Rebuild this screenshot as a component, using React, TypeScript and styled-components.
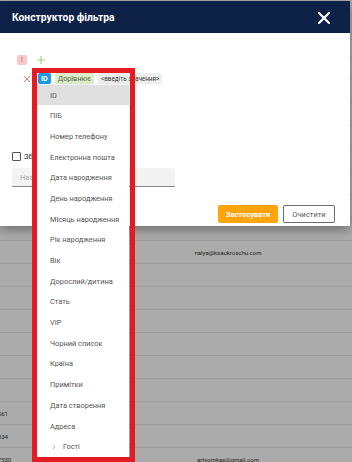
import styled, { createGlobalStyle } from "styled-components";
import { ChevronRight } from "lucide-react";

const GlobalStyle = createGlobalStyle`
  html, body {
    margin: 0;
    padding: 0;
    background: #ababab;
    font-family: Roboto, "Liberation Sans", sans-serif;
    overflow: hidden;
  }
`;

const fields = [
  "ID",
  "ПІБ",
  "Номер телефону",
  "Електронна пошта",
  "Дата народження",
  "День народження",
  "Місяць народження",
  "Рік народження",
  "Вік",
  "Дорослий/дитина",
  "Стать",
  "VIP",
  "Чорний список",
  "Країна",
  "Примітки",
  "Дата створення",
  "Адреса",
];

const rows: { phone: string; email: string }[] = Array.from(
  { length: 20 },
  () => ({ phone: "", email: "" })
);
rows[10] = { phone: "", email: "nalya@ksaukroschu.com" };
rows[17] = { phone: "+380971234561", email: "" };
rows[18] = { phone: "+380661239834", email: "" };
rows[19] = { phone: "+3809312347530", email: "artyomkas@gmail.com" };

function CloseIcon() {
  return (
    <svg width="12" height="12" viewBox="0 0 12 12">
      <path
        d="M1 1 L11 11 M11 1 L1 11"
        stroke="#fff"
        strokeWidth="2.2"
        strokeLinecap="square"
      />
    </svg>
  );
}

export default function App() {
  return (
    <Page>
      <GlobalStyle />
      <TableViewport>
        <Table>
          {rows.map((r, i) => (
            <Row key={i}>
              <Cell>{r.phone}</Cell>
              <EmailCell>{r.email}</EmailCell>
            </Row>
          ))}
        </Table>
      </TableViewport>

      <Modal>
        <Header>
          <Title>Конструктор фільтра</Title>
          <CloseButton>
            <CloseIcon />
          </CloseButton>
        </Header>
        <Body>
          <GroupRow>
            <GroupBadge>I</GroupBadge>
            <PlusIcon width="8" height="8" viewBox="0 0 8 8">
              <path d="M4 0 V8 M0 4 H8" stroke="#a6d27c" strokeWidth="1.2" />
            </PlusIcon>
          </GroupRow>
          <ConditionRow>
            <RemoveIcon width="6" height="6" viewBox="0 0 6 6">
              <path d="M0 0 L6 6 M6 0 L0 6" stroke="#f07272" strokeWidth="1" />
            </RemoveIcon>
            <FieldChipWrap>
              <Chip $bg="#1b9be6" $color="#fff" $bold>
                ID
              </Chip>
              <Dropdown>
                {fields.map((f, i) => (
                  <Item key={f} $active={i === 0}>
                    {f}
                  </Item>
                ))}
                <Item>
                  <ChevronRight size={8} strokeWidth={1.5} color="#777" />
                  <GroupName>Гості</GroupName>
                </Item>
              </Dropdown>
            </FieldChipWrap>
            <Chip $bg="#dbeec9" $color="#50603f">
              Дорівнює
            </Chip>
            <Chip $bg="#eeeeee" $color="#333" $small>
              &lt;введіть значення&gt;
            </Chip>
          </ConditionRow>
          <CheckRow>
            <CheckBox />
            <CheckLabel>Збе</CheckLabel>
          </CheckRow>
          <NameInput placeholder="Назва фільтра" />
          <Footer>
            <ApplyButton>Застосувати</ApplyButton>
            <ClearButton>Очистити</ClearButton>
          </Footer>
        </Body>
      </Modal>

      <Highlight />
    </Page>
  );
}

const Page = styled.div`
  position: relative;
  width: 352px;
  height: 462px;
  overflow: hidden;
`;

const TableViewport = styled.div`
  overflow: hidden;
  padding-top: 11px;
`;

const Table = styled.div`
  margin-left: -36px;
  width: 388px;
`;

const Row = styled.div`
  display: grid;
  grid-template-columns: 140px 1fr;
  align-items: center;
  height: 22px;
  border-bottom: 1px solid #999;
  font-size: 6px;
  color: #222;
`;

const Cell = styled.div`
  white-space: nowrap;
`;

const EmailCell = styled.div`
  text-align: center;
  white-space: nowrap;
`;

const Modal = styled.div`
  position: absolute;
  top: 1px;
  left: 0;
  width: 350px;
  background: #fff;
  box-shadow: 0 4px 10px rgba(0, 0, 0, 0.35);
  z-index: 2;
`;

const Header = styled.div`
  display: flex;
  align-items: center;
  justify-content: space-between;
  height: 32px;
  padding: 0 20px 0 12px;
  background: #0e2147;
`;

const Title = styled.div`
  color: #fff;
  font-size: 10.3px;
  font-weight: 700;
`;

const CloseButton = styled.div`
  display: flex;
  margin-top: 1px;
`;

const Body = styled.div`
  display: flex;
  flex-direction: column;
  padding: 22px 15px 3px 12px;
`;

const GroupRow = styled.div`
  display: flex;
  align-items: center;
  gap: 10px;
  height: 10px;
  padding-left: 5px;
`;

const GroupBadge = styled.div`
  width: 10px;
  height: 10px;
  border-radius: 2px;
  background: #f8c8c8;
  color: #b85656;
  font-size: 6.5px;
  display: flex;
  align-items: center;
  justify-content: center;
`;

const PlusIcon = styled.svg`
  display: block;
`;

const ConditionRow = styled.div`
  display: flex;
  align-items: center;
  gap: 4px;
  height: 11px;
  margin-top: 8px;
  padding-left: 12px;
`;

const RemoveIcon = styled.svg`
  display: block;
  margin-right: 4px;
`;

const FieldChipWrap = styled.div`
  position: relative;
  display: flex;
`;

const Chip = styled.div<{
  $bg: string;
  $color: string;
  $bold?: boolean;
  $small?: boolean;
}>`
  display: flex;
  align-items: center;
  height: 11px;
  padding: 0 3px;
  border-radius: 2px;
  background: ${(p) => p.$bg};
  color: ${(p) => p.$color};
  font-size: ${(p) => (p.$small ? "6.3px" : "7.2px")};
  font-weight: ${(p) => (p.$bold ? 700 : 400)};
  white-space: nowrap;
`;

const Dropdown = styled.div`
  position: absolute;
  top: 11.7px;
  left: -1px;
  width: 92px;
  background: #fff;
  box-shadow: 0 1px 4px rgba(0, 0, 0, 0.2);
  z-index: 3;
`;

const Item = styled.div<{ $active?: boolean }>`
  display: flex;
  align-items: center;
  gap: 4px;
  height: 20.7px;
  padding-left: 13px;
  background: ${(p) => (p.$active ? "#e0e0e0" : "#fff")};
  color: #555;
  font-size: 7.4px;
  white-space: nowrap;
`;

const GroupName = styled.span`
  margin-left: 1px;
`;

const CheckRow = styled.div`
  display: flex;
  align-items: center;
  gap: 3px;
  margin-top: 68px;
  height: 9px;
`;

const CheckBox = styled.div`
  box-sizing: border-box;
  width: 9px;
  height: 9px;
  border: 1px solid #555;
  border-radius: 1px;
`;

const CheckLabel = styled.span`
  font-size: 7.7px;
  color: #333;
`;

const NameInput = styled.input`
  box-sizing: border-box;
  width: 163px;
  height: 19px;
  margin-top: 7px;
  padding: 0 8px;
  border: none;
  border-bottom: 1px solid #888;
  border-radius: 3px 3px 0 0;
  background: #f3f3f3;
  font-family: inherit;
  font-size: 7.5px;
  outline: none;
  &::placeholder {
    color: #aaa;
  }
`;

const Footer = styled.div`
  display: flex;
  justify-content: flex-end;
  gap: 5px;
  margin-top: 18px;
`;

const ApplyButton = styled.div`
  display: flex;
  align-items: center;
  justify-content: center;
  width: 60px;
  height: 18px;
  border-radius: 2px;
  background: #ffa40a;
  color: #fff;
  font-size: 7.5px;
  font-weight: 700;
`;

const ClearButton = styled.div`
  box-sizing: border-box;
  display: flex;
  align-items: center;
  justify-content: center;
  width: 52px;
  height: 18px;
  border: 1px solid #6d6d6d;
  border-radius: 2px;
  color: #555;
  font-size: 7.5px;
`;

const Highlight = styled.div`
  position: absolute;
  top: 68px;
  left: 32px;
  width: 103px;
  height: 394px;
  box-sizing: border-box;
  border: 5px solid #e41b23;
  pointer-events: none;
  z-index: 5;
`;
